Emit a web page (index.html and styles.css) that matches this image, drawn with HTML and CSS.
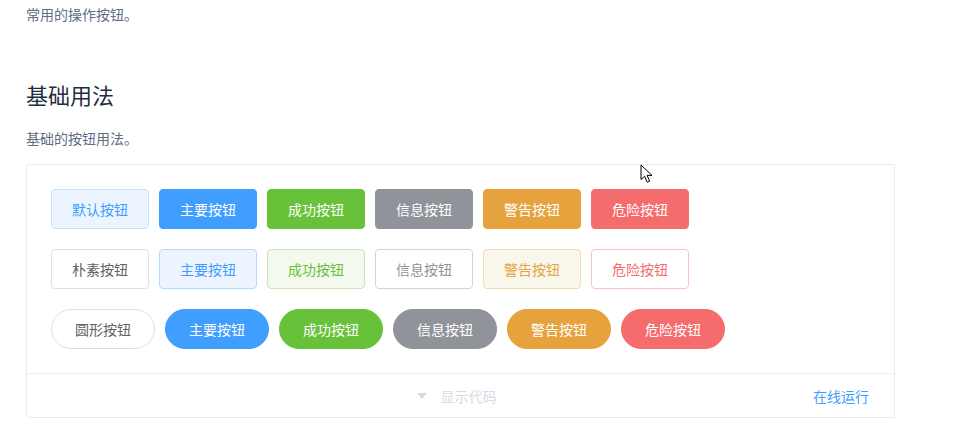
FILE: index.html
```html
<!DOCTYPE html>
<html lang="zh-CN">
<head>
    <meta charset="UTF-8">
    <meta name="viewport" content="width=device-width, initial-scale=1.0">
    <title>Button 按钮</title>
    <link rel="stylesheet" href="styles.css">
</head>
<body>
    <div class="page">
        <p class="intro">常用的操作按钮。</p>

        <h3 class="section-title">基础用法</h3>
        <p class="section-desc">基础的按钮用法。</p>

        <!-- 示例区域 -->
        <div class="demo-block">
            <div class="source">
                <div class="row">
                    <button class="btn btn-default is-hover">默认按钮</button>
                    <button class="btn btn-primary">主要按钮</button>
                    <button class="btn btn-success">成功按钮</button>
                    <button class="btn btn-info">信息按钮</button>
                    <button class="btn btn-warning">警告按钮</button>
                    <button class="btn btn-danger">危险按钮</button>
                </div>
                <div class="row">
                    <button class="btn plain">朴素按钮</button>
                    <button class="btn plain plain-primary">主要按钮</button>
                    <button class="btn plain plain-success">成功按钮</button>
                    <button class="btn plain plain-info">信息按钮</button>
                    <button class="btn plain plain-warning">警告按钮</button>
                    <button class="btn plain plain-danger">危险按钮</button>
                </div>
                <div class="row">
                    <button class="btn round">圆形按钮</button>
                    <button class="btn round btn-primary">主要按钮</button>
                    <button class="btn round btn-success">成功按钮</button>
                    <button class="btn round btn-info">信息按钮</button>
                    <button class="btn round btn-warning">警告按钮</button>
                    <button class="btn round btn-danger">危险按钮</button>
                </div>
            </div>
            <div class="control">
                <span></span>
                <span class="hint"><i class="caret"></i>显示代码</span>
                <a class="run-link" href="#">在线运行</a>
            </div>
        </div>
    </div>

    <!-- 鼠标指针 -->
    <svg class="cursor" width="14" height="20" viewBox="0 0 14 20">
        <path d="M1 1 L1 15.5 L4.6 12.3 L7.2 18.3 L9.6 17.2 L7.1 11.4 L12 11.4 Z" fill="#fff" stroke="#000" stroke-width="1" stroke-linejoin="round"/>
    </svg>
</body>
</html>
```

FILE: styles.css
```css
body {
    margin: 0;
    font-family: "Noto Sans CJK SC", "Noto Sans", sans-serif;
    background-color: #ffffff;
    color: #5e6d82;
}

.page {
    padding: 4px 58px 0 26px;
    width: 869px;
}

.intro {
    margin: 0;
    font-size: 14px;
    line-height: 21px;
}

.section-title {
    margin: 53px 0 0;
    font-size: 22px;
    font-weight: 400;
    line-height: 33px;
    color: #1f2f3d;
}

.section-desc {
    margin: 17px 0 0;
    font-size: 14px;
    line-height: 21px;
}

.demo-block {
    margin-top: 15px;
    border: 1px solid #ebebeb;
    border-radius: 3px;
}

.source {
    padding: 24px;
}

.row {
    display: flex;
    gap: 10px;
    margin-bottom: 20px;
}

.row:last-child {
    margin-bottom: 0;
}

.btn {
    padding: 12px 20px;
    font-family: inherit;
    font-size: 14px;
    line-height: 14px;
    border: 1px solid #dcdfe6;
    border-radius: 4px;
    background-color: #ffffff;
    color: #606266;
    white-space: nowrap;
    cursor: pointer;
}

.btn.is-hover {
    background-color: #ecf5ff;
    border-color: #c6e2ff;
    color: #409eff;
}

.btn-primary {
    background-color: #409eff;
    border-color: #409eff;
    color: #ffffff;
}

.btn-success {
    background-color: #67c23a;
    border-color: #67c23a;
    color: #ffffff;
}

.btn-info {
    background-color: #909399;
    border-color: #909399;
    color: #ffffff;
}

.btn-warning {
    background-color: #e6a23c;
    border-color: #e6a23c;
    color: #ffffff;
}

.btn-danger {
    background-color: #f56c6c;
    border-color: #f56c6c;
    color: #ffffff;
}

.plain-primary {
    background-color: #ecf5ff;
    border-color: #b3d8ff;
    color: #409eff;
}

.plain-success {
    background-color: #f3f9ec;
    border-color: #c9e6b6;
    color: #67c23a;
}

.plain-info {
    background-color: #ffffff;
    border-color: #d3d4d6;
    color: #909399;
}

.plain-warning {
    background-color: #f9f7ec;
    border-color: #f5dab1;
    color: #e6a23c;
}

.plain-danger {
    background-color: #ffffff;
    border-color: #f8c3c7;
    color: #f56c6c;
}

.round {
    padding: 12px 23px;
    border-radius: 20px;
}

.control {
    display: grid;
    grid-template-columns: 1fr auto 1fr;
    align-items: center;
    height: 43px;
    border-top: 1px solid #eaeefb;
    font-size: 14px;
}

.hint {
    display: flex;
    align-items: center;
    gap: 14px;
    margin-right: 8px;
    color: #d3dce6;
}

.caret {
    width: 0;
    height: 0;
    border-left: 5px solid transparent;
    border-right: 5px solid transparent;
    border-top: 6px solid #d3dce6;
}

.run-link {
    justify-self: end;
    margin-right: 25px;
    color: #409eff;
    text-decoration: none;
}

.cursor {
    position: absolute;
    left: 640px;
    top: 164px;
}
```
